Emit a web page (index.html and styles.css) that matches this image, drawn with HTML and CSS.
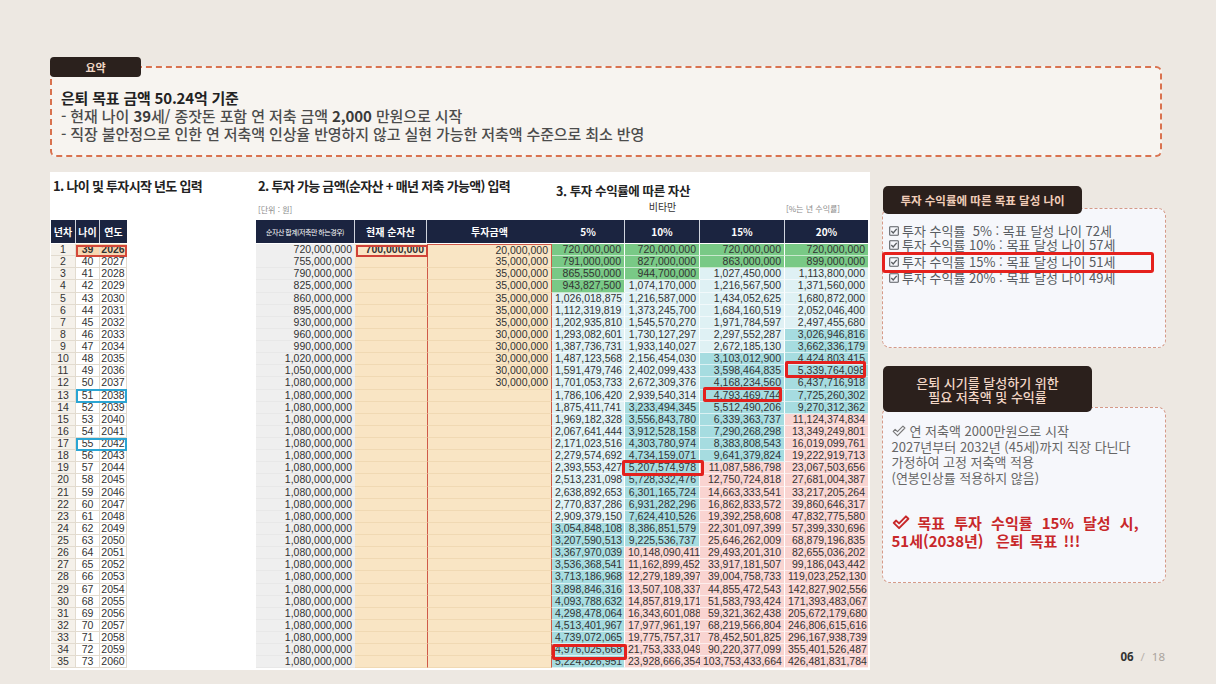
FILE: index.html
```html
<!DOCTYPE html>
<html lang="ko">
<head>
<meta charset="utf-8">
<title>은퇴 목표</title>
<link rel="stylesheet" href="styles.css">
</head>
<body>
<div class="page">
  <section class="summary">
    <div class="tab-summary">요약</div>
    <div class="summary-box">
      <h1 class="summary-title">은퇴 목표 금액 50.24억 기준</h1>
      <p class="summary-line">- 현재 나이 <b>39</b>세/ 종잣돈 포함 연 저축 금액 <b>2,000</b> 만원으로 시작</p>
      <p class="summary-line">- 직장 불안정으로 인한 연 저축액 인상율 반영하지 않고 실현 가능한 저축액 수준으로 최소 반영</p>
    </div>
  </section>

  <div class="content">
    <div class="sheet">
      <div class="sec sec1">
        <div class="sec-head">
          <h2 class="sec-title">1. 나이 및 투자시작 년도 입력</h2>
        </div>
        <div class="tbl t1" id="t1">
          <div class="hrow"><div>년차</div><div>나이</div><div>연도</div></div>
        </div>
      </div>

      <div class="sec sec2">
        <div class="sec-head">
          <h2 class="sec-title">2. 투자 가능 금액(순자산 + 매년 저축 가능액) 입력</h2>
          <div class="unit">[단위 : 원]</div>
        </div>
        <div class="tbl t2" id="t2">
          <div class="hrow"><div class="small-h">순자산 합계(저축만 하는경우)</div><div>현재 순자산</div><div>투자금액</div></div>
        </div>
      </div>

      <div class="sec sec3">
        <div class="sec-head">
          <h2 class="sec-title sec-title3">3. 투자 수익률에 따른 자산</h2>
          <div class="subrow"><span></span><span class="vita">비타만</span><span></span><span class="pct-note">[%는 년 수익률]</span></div>
        </div>
        <div class="tbl t3" id="t3">
          <div class="hrow"><div>5%</div><div>10%</div><div>15%</div><div>20%</div></div>
        </div>
      </div>
    </div>

    <aside class="side">
      <div class="ptab ptab1">투자 수익률에 따른 목표 달성 나이</div>
      <div class="pbox pbox1">
        <div class="goal"><svg class="cbox" viewBox="0 0 10 10"><rect x="0.7" y="0.7" width="8.6" height="8.6" rx="0.6"/><path d="M2.3 5.1 L4.2 7 L7.7 2.9"/></svg><span>투자 수익률  5% : 목표 달성 나이 72세</span></div>
        <div class="goal"><svg class="cbox" viewBox="0 0 10 10"><rect x="0.7" y="0.7" width="8.6" height="8.6" rx="0.6"/><path d="M2.3 5.1 L4.2 7 L7.7 2.9"/></svg><span>투자 수익률 10% : 목표 달성 나이 57세</span></div>
        <div class="goal hit"><svg class="cbox" viewBox="0 0 10 10"><rect x="0.7" y="0.7" width="8.6" height="8.6" rx="0.6"/><path d="M2.3 5.1 L4.2 7 L7.7 2.9"/></svg><span>투자 수익률 15% : 목표 달성 나이 51세</span></div>
        <div class="goal after-hit"><svg class="cbox" viewBox="0 0 10 10"><rect x="0.7" y="0.7" width="8.6" height="8.6" rx="0.6"/><path d="M2.3 5.1 L4.2 7 L7.7 2.9"/></svg><span>투자 수익률 20% : 목표 달성 나이 49세</span></div>
      </div>

      <div class="ptab ptab2">은퇴 시기를 달성하기 위한<br>필요 저축액 및 수익률</div>
      <div class="pbox pbox2">
        <p class="note"><svg class="chk" viewBox="0 0 16 14"><path d="M1.2 7.4 L3.5 5.2 L6.2 7.8 L12.6 1.3 L14.9 3.5 L6.2 12.3 Z"/></svg>연 저축액 2000만원으로 시작</p>
        <p class="note">2027년부터 2032년 (45세)까지 직장 다닌다</p>
        <p class="note">가정하여 고정 저축액 적용</p>
        <p class="note">(연봉인상률 적용하지 않음)</p>
        <p class="goal-red first-red"><svg class="chk chk-red" viewBox="0 0 16 14"><path d="M1.2 7.4 L3.5 5.2 L6.2 7.8 L12.6 1.3 L14.9 3.5 L6.2 12.3 Z"/></svg>목표 투자 수익률 15% 달성 시,</p>
        <p class="goal-red">51세(2038년)  은퇴 목표 !!!</p>
      </div>

      <div class="pagenum"><b>06</b><span class="sep">/</span><span class="tot">18</span></div>
    </aside>
  </div>
</div>
<script src="script.js"></script>
</body>
</html>
```

FILE: styles.css
```css
* { box-sizing: border-box; margin: 0; padding: 0; }
html, body { background: #ede8e2; }
body {
  width: 1216px;
  height: 684px;
  overflow: hidden;
  font-family: "Noto Sans CJK KR", "Noto Sans", sans-serif;
  color: #222;
}
.page { padding: 57px 0 0 50px; }

/* summary */
.summary { width: 1112px; display: flex; flex-direction: column; }
.tab-summary {
  width: 91px; height: 20px;
  background: #2b211d; color: #f0d6c4;
  font-size: 11px; font-weight: 700; line-height: 20px; text-align: center;
  border-radius: 4px;
  margin-bottom: -11px;
  position: relative; z-index: 1;
}
.summary-box {
  height: 91px;
  border: 2px dashed #d9724f;
  border-radius: 6px;
  background: #f7f4f0;
  padding: 21px 9px 0;
}
.summary-title { font-size: 15px; font-weight: 700; line-height: 18px; color: #222; letter-spacing: -0.2px; }
.summary-line { font-size: 15px; line-height: 18px; color: #4c4c4c; font-weight: 500; letter-spacing: -0.1px; }
.summary-line b { font-weight: 700; color: #3a3a3a; }

/* content */
.content { display: flex; margin-top: 15px; height: 498px; }
.sheet { width: 820px; background: #fff; display: flex; }
.sec1 { width: 206px; padding-left: 1px; }
.sec2 { width: 296px; }
.sec3 { width: 316px; }
.sec-head { height: 48px; display: flex; flex-direction: column; }
.sec-title {
  font-size: 13px; font-weight: 700; line-height: 16px;
  letter-spacing: -0.7px; color: #222;
  margin-top: 6px; margin-left: 2px; white-space: nowrap;
}
.sec-title3 { font-size: 12.5px; letter-spacing: -0.4px; margin-top: 11px; margin-left: 4px; }
.unit { font-size: 8px; color: #8a8a8a; line-height: 10px; margin-top: 11px; margin-left: 2px; }
.subrow {
  display: grid; grid-template-columns: 73px 75px 85px 83px;
  height: 16px; line-height: 16px;
}
.vita { text-align: center; font-size: 10px; color: #333; }
.pct-note { font-size: 8px; color: #8a8a8a; padding-left: 1px; padding-top: 2px; }

/* tables */
.tbl { display: flex; flex-direction: column; }
.t1 { width: 76px; }
.t2 { width: 296px; }
.t3 { width: 316px; }
.hrow {
  height: 24px; display: grid;
  background: #1b2440; color: #fff;
  font-size: 10px; font-weight: 700;
  border-bottom: 1px solid #fff;
}
.hrow > div {
  display: flex; align-items: center; justify-content: center;
  border-right: 1px solid #cfd3dc; white-space: nowrap;
}
.hrow > div:last-child { border-right: none; }
.hrow .small-h { font-size: 7px; font-weight: 400; letter-spacing: -0.5px; }
.row { height: 12.14px; display: grid; position: relative; }
.c {
  font-family: "Liberation Sans Narrow", "Liberation Sans", Arial, sans-serif;
  font-size: 10.5px; line-height: 11px;
  color: #333; white-space: nowrap;
  padding: 0 3px; text-align: right;
}
.t1 .hrow, .t1 .row { grid-template-columns: 25px 24px 27px; }
.t2 .hrow, .t2 .row { grid-template-columns: 99px 72px 125px; }
.t3 .hrow, .t3 .row { grid-template-columns: 73px 75px 85px 83px; }

/* table 1 */
.t1 .c { text-align: center; padding: 0; border-right: 1px solid #e2dbcf; border-bottom: 1px solid #e2dbcf; background: #fff; }
.t1 .yr { background: #f5f1ea; }
.t1 .first .age, .t1 .first .year { background: #f7d7b1; font-weight: 700; }
.t1 .first::after {
  content: ""; position: absolute; left: 25px; right: 0; top: 0.5px; bottom: -0.5px;
  border: 2px solid #d3483a; z-index: 2;
}
.t1 .mark::after {
  content: ""; position: absolute; left: 25px; right: 0; top: -0.5px; bottom: -1px;
  border: 2px solid #2ba5d3; z-index: 2;
}

/* table 2 */
.t2 .net { background: #efefef; border-bottom: 1px solid #e8e8e8; }
.t2 .cur, .t2 .inv { background: #f9e5c4; border-bottom: 1px solid #f0d9b3; }
.t2 .cur { font-weight: 700; }
.t2 .inv { border-left: 1.5px solid #cf5a48; border-right: 1.5px solid #cf5a48; }
.t2 .first .inv { border-top: 1.5px solid #cf5a48; }
.t2 .first .cur { position: relative; }
.t2 .first .cur::after {
  content: ""; position: absolute; left: 0.5px; right: -1px; top: 0.5px; bottom: -0.5px;
  border: 2px solid #cf4238; z-index: 2;
}

/* table 3 */
.t3 .c { border-right: 1px solid #fff; border-bottom: 1px solid rgba(255,255,255,0.6); }
.t3 .c:last-child { border-right: none; }
.g { background: #79c986; }
.l { background: #dff1f4; }
.t { background: #a6dce0; }
.p { background: #f9d4d1; }
.hl { position: relative; }
.hl::after {
  content: ""; position: absolute;
  border: 3px solid #e3211d; border-radius: 2px; z-index: 3;
}
.hl20::after { left: 0; right: 2px; top: -4px; bottom: -1.5px; }
.hl15::after { left: 3px; right: 2px; top: -2.7px; bottom: -1.2px; }
.hl10::after { left: -3px; right: -5px; top: -2.5px; bottom: -2.3px; }
.hl5::after { left: 0; right: -3px; top: 0; bottom: -5px; }

/* side */
.side { width: 284px; margin-left: 12px; display: flex; flex-direction: column; }
.ptab {
  background: #2b201c; border-radius: 5px;
  margin-left: 1px; position: relative; z-index: 1;
  text-align: center;
}
.ptab1 {
  width: 199px; height: 28px; margin-top: 14px; margin-bottom: -6px;
  font-size: 11.5px; font-weight: 700; line-height: 28px; color: #f1cdb8;
}
.ptab2 {
  width: 209px; height: 46px; margin-top: 18px; margin-bottom: -5px;
  font-size: 13px; font-weight: 500; line-height: 14px; padding-top: 10px; color: #f2d6c6;
}
.pbox { border: 1.5px dashed #d59a88; border-radius: 8px; background: #f6f7fb; }
.pbox1 { height: 140px; padding: 14.5px 6px 0; }
.pbox2 { height: 176px; padding: 15px 8.5px 0; }

.goal {
  display: flex; align-items: center; gap: 3px;
  font-size: 13px; line-height: 14px; height: 14px;
  color: #565b61; white-space: pre;
}
.cbox { width: 10px; height: 10px; flex: none; }
.cbox rect { fill: none; stroke: #5a5e63; stroke-width: 1.1; }
.cbox path { fill: none; stroke: #5a5e63; stroke-width: 1.4; }
.goal.hit {
  height: 21px; width: 272px;
  margin-left: -7.5px; padding-left: 4.5px;
  border: 3px solid #e5211d; border-radius: 3px;
  position: relative; z-index: 2;
}
.goal.after-hit { margin-top: -2px; }

.note { font-size: 13px; line-height: 15.5px; color: #666; white-space: nowrap; display: flex; align-items: center; }
.chk { width: 14px; height: 12px; flex: none; margin-right: 4px; }
.chk path { fill: none; stroke: #777; stroke-width: 1.3; stroke-linejoin: round; }
.goal-red {
  font-size: 15px; font-weight: 700; line-height: 17.5px; color: #c8282a;
  white-space: pre; display: flex; align-items: center; word-spacing: 2px;
}
.first-red { margin-top: 29px; word-spacing: 5px; }
.chk-red { width: 18px; height: 15px; margin-right: 8px; }
.chk-red path { stroke: #c8282a; stroke-width: 1.8; }

.pagenum {
  margin-top: auto; margin-bottom: 7px;
  text-align: right; padding-right: 1px;
  font-family: "Noto Sans", sans-serif; font-size: 11.5px; line-height: 12px;
}
.pagenum b { color: #333; font-weight: 700; }
.pagenum .sep { color: #b9b3ad; margin: 0 7px 0 7px; }
.pagenum .tot { color: #aaa49e; }
```

FILE: script.js
```js
(function () {
  var N = 35;
  function fmt(x) {
    return String(Math.round(x)).replace(/\B(?=(\d{3})+(?!\d))/g, ',');
  }
  function inv(i) {
    if (i === 0) return 20000000;
    if (i <= 6) return 35000000;
    if (i <= 11) return 30000000;
    return 0;
  }
  function cls(v) {
    if (v < 1e9) return 'g';
    if (v < 3e9) return 'l';
    if (v < 1e10) return 't';
    return 'p';
  }
  var t1 = document.getElementById('t1');
  var t2 = document.getElementById('t2');
  var t3 = document.getElementById('t3');
  var pct = [5, 10, 15, 20];
  var vals = [0, 0, 0, 0];
  var net = 0;
  var hl = { '10-3': 'hl20', '12-2': 'hl15', '18-1': 'hl10', '33-0': 'hl5' };
  for (var i = 0; i < N; i++) {
    var r1 = document.createElement('div');
    r1.className = 'row' + (i === 0 ? ' first' : '') + ((i === 12 || i === 16) ? ' mark' : '');
    r1.innerHTML = '<div class="c yr">' + (i + 1) + '</div><div class="c age">' + (39 + i) +
      '</div><div class="c year">' + (2026 + i) + '</div>';
    t1.appendChild(r1);

    net = i === 0 ? 720000000 : net + inv(i);
    var r2 = document.createElement('div');
    r2.className = 'row' + (i === 0 ? ' first' : '');
    r2.innerHTML = '<div class="c net">' + fmt(net) + '</div><div class="c cur">' +
      (i === 0 ? '700,000,000' : '') + '</div><div class="c inv">' +
      (inv(i) ? fmt(inv(i)) : '') + '</div>';
    t2.appendChild(r2);

    var r3 = document.createElement('div');
    r3.className = 'row';
    var html = '';
    for (var k = 0; k < 4; k++) {
      vals[k] = i === 0 ? 720000000 : Math.round(vals[k] * (100 + pct[k]) / 100) + inv(i);
      var extra = hl[i + '-' + k] ? ' hl ' + hl[i + '-' + k] : '';
      html += '<div class="c ' + cls(vals[k]) + extra + '">' + fmt(vals[k]) + '</div>';
    }
    r3.innerHTML = html;
    t3.appendChild(r3);
  }
})();
```
